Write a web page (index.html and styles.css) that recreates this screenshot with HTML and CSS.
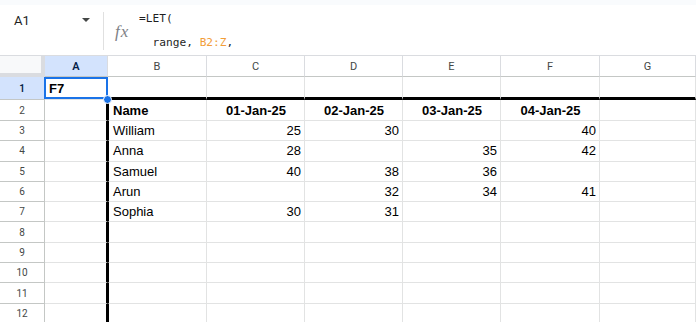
FILE: index.html
```html
<!DOCTYPE html>
<html lang="en">
<head>
    <meta charset="UTF-8">
    <title>Sheet</title>
    <link rel="stylesheet" href="styles.css">
</head>
<body>
    <div class="top-strip"></div>

    <div class="formula-bar">
        <div class="name-box">
            <span>A1</span>
            <svg class="caret" width="8" height="4" viewBox="0 0 8 4"><path d="M0 0h8L4 4z" fill="#444746"/></svg>
        </div>
        <div class="divider"></div>
        <div class="fx">fx</div>
        <div class="formula">
            <div class="line">=LET(</div>
            <div class="line">  range, <span class="ref">B2:Z</span>,</div>
        </div>
    </div>

    <div class="sheet">
        <div class="row head-row">
            <div class="corner"></div>
            <div class="ch sel">A</div>
            <div class="ch">B</div>
            <div class="ch">C</div>
            <div class="ch">D</div>
            <div class="ch">E</div>
            <div class="ch">F</div>
            <div class="ch">G</div>
        </div>

        <div class="row r1">
            <div class="rh sel">1</div>
            <div class="cell bold active">F7<span class="handle"></span></div>
            <div class="cell top-edge"></div>
            <div class="cell top-edge"></div>
            <div class="cell top-edge"></div>
            <div class="cell top-edge"></div>
            <div class="cell top-edge"></div>
            <div class="cell top-edge"></div>
        </div>

        <div class="row r2">
            <div class="rh">2</div>
            <div class="cell left-edge"></div>
            <div class="cell bold range-start">Name</div>
            <div class="cell bold center">01-Jan-25</div>
            <div class="cell bold center">02-Jan-25</div>
            <div class="cell bold center">03-Jan-25</div>
            <div class="cell bold center">04-Jan-25</div>
            <div class="cell"></div>
        </div>

        <div class="row">
            <div class="rh">3</div>
            <div class="cell left-edge"></div>
            <div class="cell range-start">William</div>
            <div class="cell num">25</div>
            <div class="cell num">30</div>
            <div class="cell num"></div>
            <div class="cell num">40</div>
            <div class="cell"></div>
        </div>

        <div class="row">
            <div class="rh">4</div>
            <div class="cell left-edge"></div>
            <div class="cell range-start">Anna</div>
            <div class="cell num">28</div>
            <div class="cell num"></div>
            <div class="cell num">35</div>
            <div class="cell num">42</div>
            <div class="cell"></div>
        </div>

        <div class="row">
            <div class="rh">5</div>
            <div class="cell left-edge"></div>
            <div class="cell range-start">Samuel</div>
            <div class="cell num">40</div>
            <div class="cell num">38</div>
            <div class="cell num">36</div>
            <div class="cell num"></div>
            <div class="cell"></div>
        </div>

        <div class="row">
            <div class="rh">6</div>
            <div class="cell left-edge"></div>
            <div class="cell range-start">Arun</div>
            <div class="cell num"></div>
            <div class="cell num">32</div>
            <div class="cell num">34</div>
            <div class="cell num">41</div>
            <div class="cell"></div>
        </div>

        <div class="row">
            <div class="rh">7</div>
            <div class="cell left-edge"></div>
            <div class="cell range-start">Sophia</div>
            <div class="cell num">30</div>
            <div class="cell num">31</div>
            <div class="cell num"></div>
            <div class="cell num"></div>
            <div class="cell"></div>
        </div>

        <div class="row">
            <div class="rh">8</div>
            <div class="cell left-edge"></div>
            <div class="cell range-start"></div>
            <div class="cell"></div><div class="cell"></div><div class="cell"></div><div class="cell"></div><div class="cell"></div>
        </div>

        <div class="row">
            <div class="rh">9</div>
            <div class="cell left-edge"></div>
            <div class="cell range-start"></div>
            <div class="cell"></div><div class="cell"></div><div class="cell"></div><div class="cell"></div><div class="cell"></div>
        </div>

        <div class="row">
            <div class="rh">10</div>
            <div class="cell left-edge"></div>
            <div class="cell range-start"></div>
            <div class="cell"></div><div class="cell"></div><div class="cell"></div><div class="cell"></div><div class="cell"></div>
        </div>

        <div class="row">
            <div class="rh">11</div>
            <div class="cell left-edge"></div>
            <div class="cell range-start"></div>
            <div class="cell"></div><div class="cell"></div><div class="cell"></div><div class="cell"></div><div class="cell"></div>
        </div>

        <div class="row">
            <div class="rh">12</div>
            <div class="cell left-edge"></div>
            <div class="cell range-start"></div>
            <div class="cell"></div><div class="cell"></div><div class="cell"></div><div class="cell"></div><div class="cell"></div>
        </div>
    </div>
</body>
</html>
```

FILE: styles.css
```css
* {
    margin: 0;
    padding: 0;
    box-sizing: border-box;
}

body {
    font-family: "Liberation Sans", Arial, sans-serif;
    background: #fff;
    color: #000;
    overflow: hidden;
}

.top-strip {
    height: 5px;
    background: #f9fbfd;
}

/* formula bar */

.formula-bar {
    display: flex;
    align-items: flex-start;
    height: 51px;
    border-bottom: 1px solid #dadce0;
}

.name-box {
    display: flex;
    align-items: center;
    width: 103px;
    height: 26px;
    margin-top: 2px;
    padding: 0 13px 0 14px;
    font-family: Roboto, sans-serif;
    font-size: 13px;
    color: #1f1f1f;
}

.name-box .caret {
    margin-left: auto;
}

.divider {
    width: 1px;
    height: 38px;
    margin-top: 7px;
    background: #e0e0e0;
}

.fx {
    width: 18px;
    margin: 19px 0 0 11px;
    font-family: "Liberation Serif", serif;
    font-style: italic;
    font-size: 17px;
    line-height: 16px;
    letter-spacing: 1px;
    color: #7d8085;
}

.formula {
    margin: 2px 0 0 6px;
    font-family: "DejaVu Sans Mono", monospace;
    font-size: 11.2px;
    line-height: 24px;
    color: #1f1f1f;
}

.formula .line {
    white-space: pre;
}

.formula .ref {
    color: #f29d38;
}

/* grid */

.row {
    display: grid;
    grid-template-columns: 45px 63px 99px 98px 98px 98px 99px 1fr;
    height: 20.3px;
}

.head-row {
    height: 21px;
}

.r1 {
    height: 23px;
}

.r2 {
    height: 21px;
}

.corner {
    background: #f8f9fa;
    border-right: 4px solid #dadce0;
    border-bottom: 4px solid #dadce0;
}

.ch {
    display: flex;
    align-items: center;
    justify-content: center;
    border-right: 1px solid #dadce0;
    border-bottom: 1px solid #c4c7c5;
    font-family: Roboto, sans-serif;
    font-size: 11px;
    color: #444746;
}

.rh {
    display: flex;
    align-items: center;
    justify-content: center;
    border-right: 1px solid #c4c7c5;
    border-bottom: 1px solid #c4c7c5;
    font-family: Roboto, sans-serif;
    font-size: 10px;
    color: #444746;
}

.ch.sel,
.rh.sel {
    background: #d3e3fd;
    color: #041e49;
    font-weight: 600;
}

.cell {
    display: flex;
    align-items: center;
    padding: 0 3px 0 4px;
    border-right: 1px solid #e2e3e3;
    border-bottom: 1px solid #e2e3e3;
    font-size: 13px;
    white-space: nowrap;
    overflow: hidden;
}

.bold {
    font-weight: bold;
}

.num {
    justify-content: flex-end;
}

.center {
    justify-content: center;
}

.top-edge {
    border-bottom: 3px solid #000;
}

.left-edge {
    border-right: 2px solid #000;
}

.range-start {
    border-left: 1px solid #000;
}

/* active cell */

.active {
    position: relative;
    overflow: visible;
}

.active::after {
    content: "";
    position: absolute;
    top: 0;
    left: -1px;
    right: -1px;
    bottom: 0;
    border: 2px solid #1a73e8;
}

.handle {
    position: absolute;
    right: -5px;
    bottom: -5px;
    z-index: 2;
    width: 9px;
    height: 9px;
    border-radius: 50%;
    background: #1a73e8;
    border: 1px solid #fff;
}
```
